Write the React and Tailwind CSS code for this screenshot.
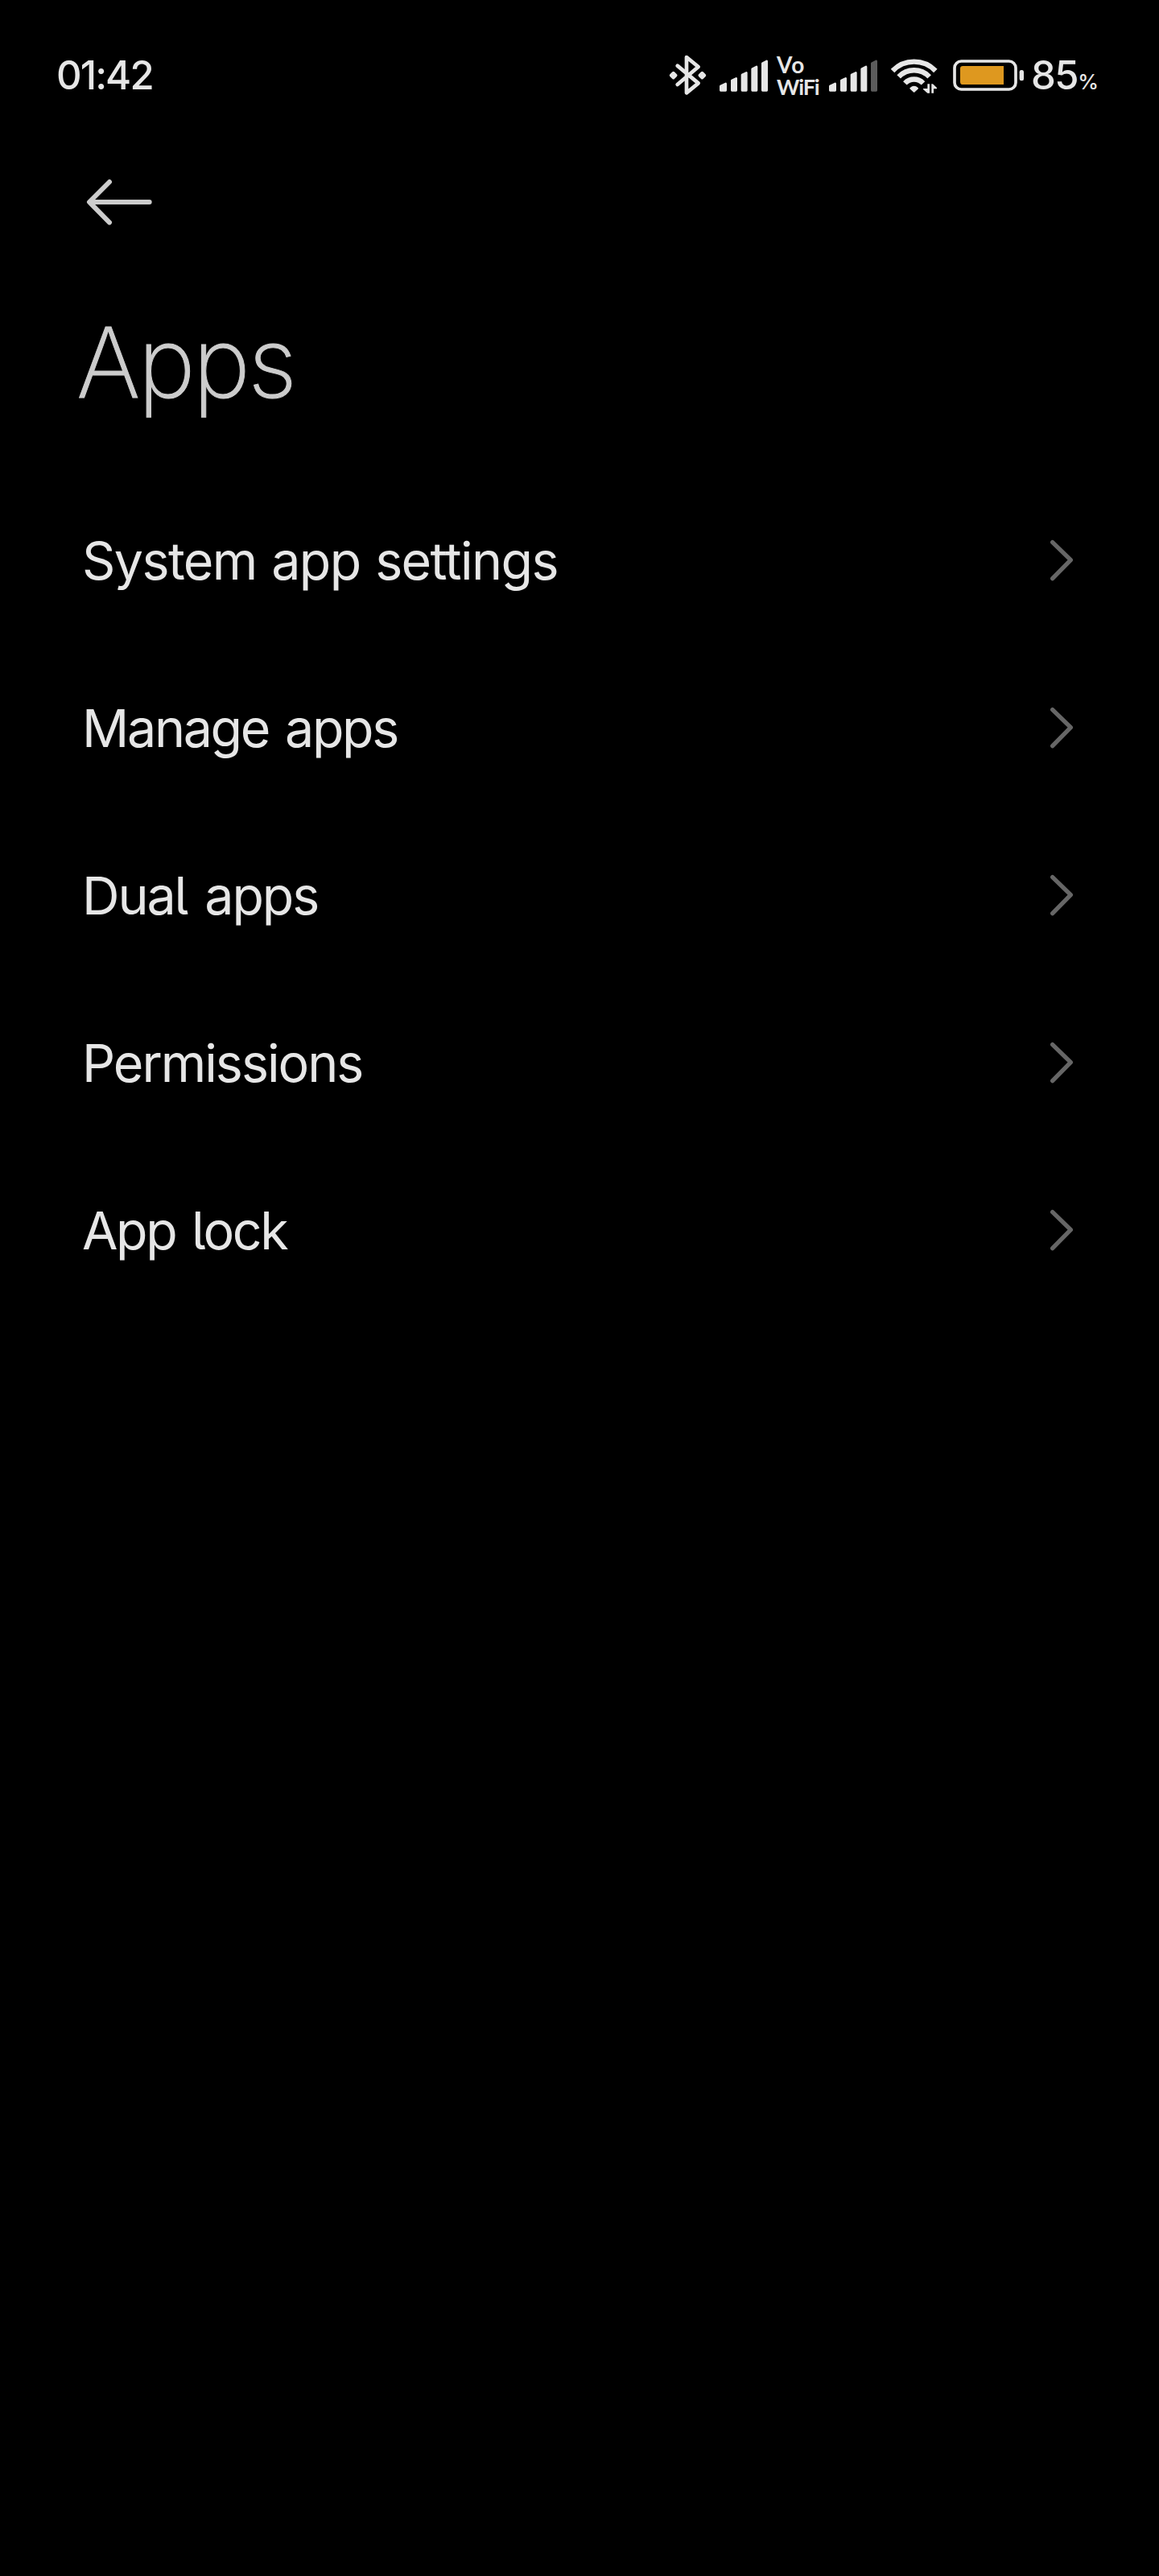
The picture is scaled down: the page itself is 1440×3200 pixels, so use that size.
import React from 'react';

const menuItems = [
  { label: 'System app settings', tracking: 'tracking-[-1.6px] [word-spacing:2px]' },
  { label: 'Manage apps', tracking: 'tracking-[-2.3px] [word-spacing:4px]' },
  { label: 'Dual apps', tracking: 'tracking-[-2.1px] [word-spacing:6px]' },
  { label: 'Permissions', tracking: 'tracking-[-2px]' },
  { label: 'App lock', tracking: 'tracking-[-2.4px] [word-spacing:4px]' },
];

const BluetoothIcon = () => (
  <svg className="w-[50px] h-[53px]" viewBox="60 51 150 159" fill="none">
    <path
      d="M95 95 L173 160 L129 196 V63 L173 99 L95 165"
      stroke="currentColor"
      strokeWidth="14"
      strokeLinecap="round"
      strokeLinejoin="round"
    />
    <path
      d="M80 122 L89 131 L80 140 L71 131 Z M187 122 L196 131 L187 140 L178 131 Z"
      fill="currentColor"
      stroke="currentColor"
      strokeWidth="11"
      strokeLinejoin="round"
    />
  </svg>
);

const bars = [
  'M256 171 L275 162 V187 H256 Z',
  'M298 150 L314 142 V187 H298 Z',
  'M336 129 L352 121 V187 H336 Z',
  'M374 107 L390 99 V187 H374 Z',
  'M412 86 L428 78 V187 H412 Z',
];

const SignalIcon = ({ level }) => (
  <svg className="w-[63px] h-[53px]" viewBox="249 51 189 159">
    {bars.map((d, i) => (
      <path
        key={d}
        d={d}
        className={i < level ? 'fill-[#e6e6e6] stroke-[#e6e6e6]' : 'fill-[#5c5c5c] stroke-[#5c5c5c]'}
        strokeWidth="8"
        strokeLinejoin="round"
      />
    ))}
  </svg>
);

const WifiIcon = () => (
  <svg className="w-[61px] h-[53px]" viewBox="285 51 183 159" fill="none">
    <g stroke="currentColor" strokeWidth="19">
      <path d="M297 114 A111 111 0 0 1 457 114" />
      <path d="M320 136 A79 79 0 0 1 434 136" />
      <path d="M343 160 A47 47 0 0 1 411 160" />
    </g>
    <path
      d="M364 179 Q377 168 390 179 L377 191 Z"
      fill="currentColor"
      stroke="currentColor"
      strokeWidth="6"
      strokeLinejoin="round"
    />
    <path
      d="M427 163 H435 V197 H427 L411 183 V180 H427 Z M442 163 H447 L462 177 V181 H450 V197 H442 Z"
      fill="currentColor"
    />
  </svg>
);

const BatteryIcon = () => (
  <svg className="w-[89px] h-[53px]" viewBox="42 51 267 159" fill="none">
    <rect x="48" y="78" width="228" height="105" rx="25" stroke="currentColor" strokeWidth="11" />
    <path d="M231 96 V165 H79 Q69 165 69 155 V106 Q69 96 79 96 Z" fill="#de981f" />
    <rect x="290" y="111" width="16" height="40" rx="7" fill="currentColor" />
  </svg>
);

const StatusBar = () => (
  <div className="flex items-center h-[187px] pl-[70px] text-[#e6e6e6]">
    <span className="w-[760px] text-[49px] leading-none font-medium tracking-[-1.9px]">01:42</span>
    <BluetoothIcon />
    <div className="ml-[13px]">
      <SignalIcon level={5} />
    </div>
    <div className="ml-[9px] w-[64px] flex flex-col font-['Lato','Inter',sans-serif] font-bold whitespace-nowrap">
      <span className="text-[28px] leading-[27px] tracking-[1px]">Vo</span>
      <span className="text-[27px] leading-[27px] tracking-[-1.1px] [font-variant-ligatures:none]">WiFi</span>
    </div>
    <SignalIcon level={4} />
    <div className="ml-[13px]">
      <WifiIcon />
    </div>
    <div className="ml-[18px]">
      <BatteryIcon />
    </div>
    <div className="ml-[8px] flex items-baseline leading-none">
      <span className="text-[49px] font-medium tracking-[-1.5px]">85</span>
      <span className="text-[26px] font-medium tracking-[-1px]">%</span>
    </div>
  </div>
);

const App = () => {
  return (
    <div className="w-[1440px] h-[3200px] bg-black overflow-hidden font-['Inter','Noto_Sans',sans-serif]">
      <StatusBar />

      {/* Header */}
      <div className="h-[405px]">
        <button className="block pt-[34px] pl-[104px] text-[#cccccc]" aria-label="Back">
          <svg className="w-[90px] h-[60px]" viewBox="72 63 270 180" fill="none">
            <path
              d="M168 78 L93 153 L168 229 M96 153 H317"
              stroke="currentColor"
              strokeWidth="18"
              strokeLinecap="round"
              strokeLinejoin="round"
            />
          </svg>
        </button>
        <h1 className="pt-[97px] pl-[95px] text-[121px] leading-[145px] font-extralight tracking-[-3.2px] text-[#cccccc] [-webkit-text-stroke:1px_#cccccc]">
          Apps
        </h1>
      </div>

      {/* Menu */}
      <ul>
        {menuItems.map((item) => (
          <li key={item.label} className="flex items-center justify-between h-[208px] pl-[102px] pr-[100px]">
            <span
              className={`pt-[2px] text-[64.5px] leading-[80px] text-[#e6e6e6] [font-feature-settings:'cv05'] ${item.tracking}`}
            >
              {item.label}
            </span>
            <svg className="w-[40px] h-[60px]" viewBox="90 47 120 180" fill="none">
              <path
                d="M113 70 L181 136 L113 205"
                stroke="#666666"
                strokeWidth="16"
                strokeLinecap="round"
                strokeLinejoin="round"
              />
            </svg>
          </li>
        ))}
      </ul>
    </div>
  );
};

export default App;
